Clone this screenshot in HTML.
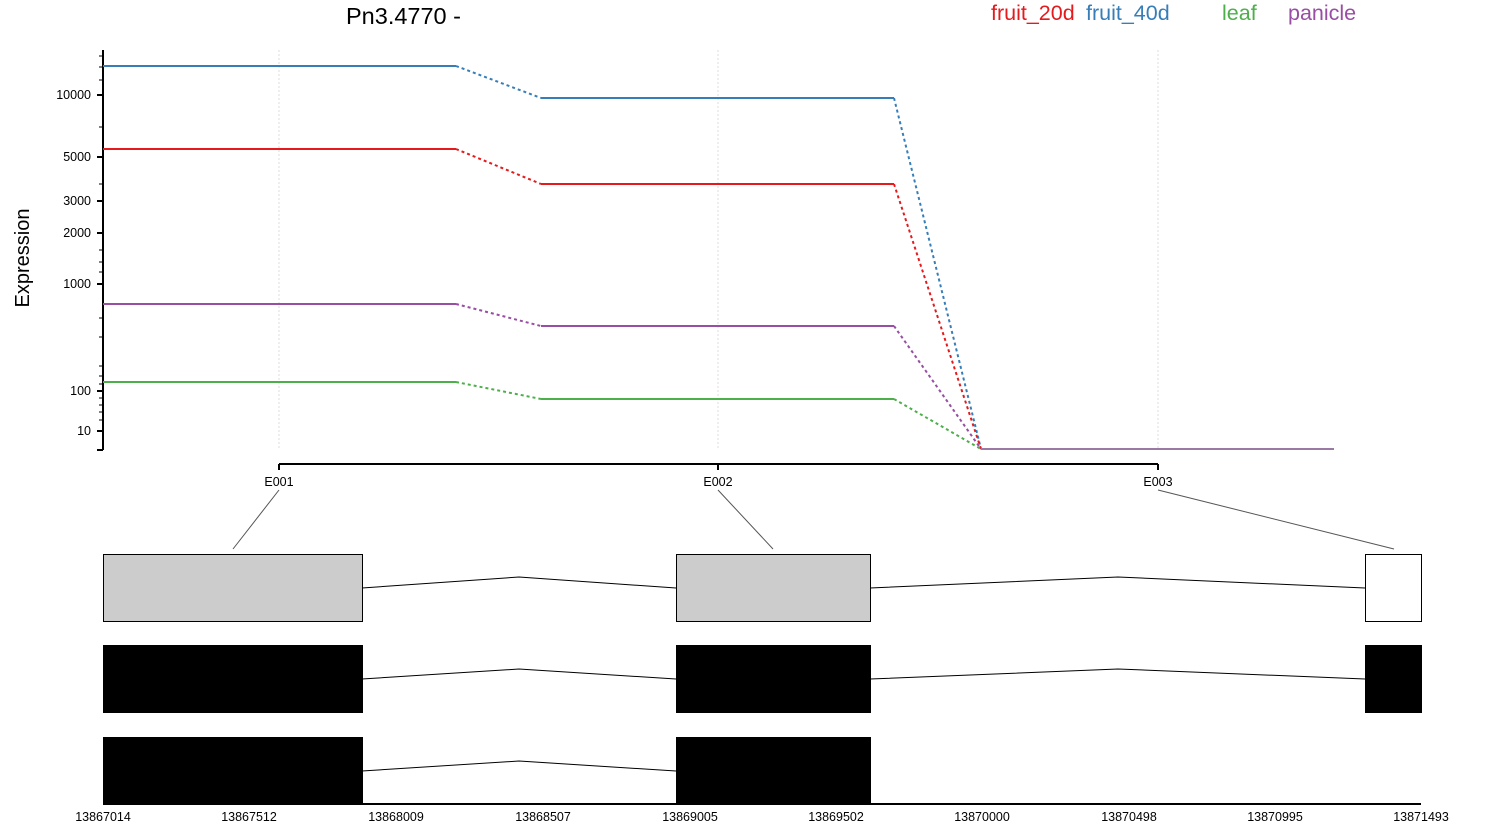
<!DOCTYPE html>
<html><head><meta charset="utf-8"><style>body{margin:0;background:#fff}svg{display:block;font-family:"Liberation Sans",sans-serif}</style></head><body>
<svg width="1500" height="839" viewBox="0 0 1500 839">
<text x="346" y="24" font-size="23.5">Pn3.4770 -</text>
<g font-size="21.5"><text x="991" y="20" fill="#e41a1c">fruit_20d</text><text x="1086" y="20" fill="#377eb8">fruit_40d</text><text x="1222" y="20" fill="#4daf4a">leaf</text><text x="1288" y="20" fill="#984ea3">panicle</text></g>
<text transform="translate(29,258) rotate(-90)" font-size="20" text-anchor="middle">Expression</text>
<g stroke="#ddd" stroke-dasharray="2,2"><line x1="279" y1="50" x2="279" y2="450"/><line x1="718" y1="50" x2="718" y2="450"/><line x1="1158" y1="50" x2="1158" y2="450"/></g>
<g stroke="#000" stroke-width="2"><line x1="103" y1="50" x2="103" y2="450"/><line x1="279" y1="464" x2="1158" y2="464"/><line x1="103" y1="804" x2="1421" y2="804"/></g>
<g stroke="#000" stroke-width="2"><line x1="97" y1="95" x2="103" y2="95"/><line x1="97" y1="157" x2="103" y2="157"/><line x1="97" y1="201" x2="103" y2="201"/><line x1="97" y1="233" x2="103" y2="233"/><line x1="97" y1="284" x2="103" y2="284"/><line x1="97" y1="391" x2="103" y2="391"/><line x1="97" y1="431" x2="103" y2="431"/><line x1="97" y1="450" x2="103" y2="450"/>
<line x1="279" y1="464" x2="279" y2="470"/><line x1="718" y1="464" x2="718" y2="470"/><line x1="1158" y1="464" x2="1158" y2="470"/></g>
<g stroke="#000" stroke-width="1"><line x1="99" y1="56" x2="103" y2="56"/><line x1="99" y1="67" x2="103" y2="67"/><line x1="99" y1="80" x2="103" y2="80"/><line x1="99" y1="127" x2="103" y2="127"/><line x1="99" y1="184" x2="103" y2="184"/><line x1="99" y1="250" x2="103" y2="250"/><line x1="99" y1="262" x2="103" y2="262"/><line x1="99" y1="272" x2="103" y2="272"/><line x1="99" y1="318" x2="103" y2="318"/><line x1="99" y1="337" x2="103" y2="337"/><line x1="99" y1="366" x2="103" y2="366"/><line x1="99" y1="376" x2="103" y2="376"/><line x1="99" y1="384" x2="103" y2="384"/><line x1="99" y1="398" x2="103" y2="398"/><line x1="99" y1="405" x2="103" y2="405"/><line x1="99" y1="412" x2="103" y2="412"/><line x1="99" y1="420" x2="103" y2="420"/></g>
<g font-size="12.5" text-anchor="end"><text x="91" y="99">10000</text><text x="91" y="161">5000</text><text x="91" y="205">3000</text><text x="91" y="237">2000</text><text x="91" y="288">1000</text><text x="91" y="395">100</text><text x="91" y="435">10</text></g>
<g font-size="12.5" text-anchor="middle"><text x="279" y="486">E001</text><text x="718" y="486">E002</text><text x="1158" y="486">E003</text></g>
<g fill="none" stroke-width="2">
<g stroke="#377eb8"><path d="M103 66H456M541 98H894"/><path d="M456 66L541 98M894 98L981 449" stroke-dasharray="3,3"/></g>
<g stroke="#e41a1c"><path d="M103 149H456M541 184H894"/><path d="M456 149L541 184M894 184L981 449" stroke-dasharray="3,3"/></g>
<g stroke="#4daf4a"><path d="M103 382H456M541 399H894"/><path d="M456 382L541 399M894 399L981 449" stroke-dasharray="3,3"/></g>
<g stroke="#984ea3"><path d="M103 304H456M541 326H894"/><path d="M456 304L541 326M894 326L981 449" stroke-dasharray="3,3"/><path d="M981 449H1334" stroke="#9a7aa5"/></g>
</g>
<g stroke="#555" stroke-width="1" fill="none"><path d="M279 490L233 549M718 490L773 549M1158 490L1394 549"/></g>
<g stroke="#000" stroke-width="1" fill="none"><path d="M362 588L519 577L676 588M870 588L1118 577L1365 588M362 679L519 669L676 679M870 679L1118 669L1365 679M362 771L519 761L676 771"/></g>
<g stroke="#000" stroke-width="1"><rect x="103.5" y="554.5" width="259" height="67" fill="#ccc"/><rect x="676.5" y="554.5" width="194" height="67" fill="#ccc"/><rect x="1365.5" y="554.5" width="56" height="67" fill="#fff"/></g>
<g fill="#000"><rect x="103" y="645" width="260" height="68"/><rect x="676" y="645" width="195" height="68"/><rect x="1365" y="645" width="57" height="68"/><rect x="103" y="737" width="260" height="67"/><rect x="676" y="737" width="195" height="67"/></g>
<g font-size="12.5" text-anchor="middle"><text x="103" y="821">13867014</text><text x="249" y="821">13867512</text><text x="396" y="821">13868009</text><text x="543" y="821">13868507</text><text x="690" y="821">13869005</text><text x="836" y="821">13869502</text><text x="982" y="821">13870000</text><text x="1129" y="821">13870498</text><text x="1275" y="821">13870995</text><text x="1421" y="821">13871493</text></g>
</svg>
</body></html>
